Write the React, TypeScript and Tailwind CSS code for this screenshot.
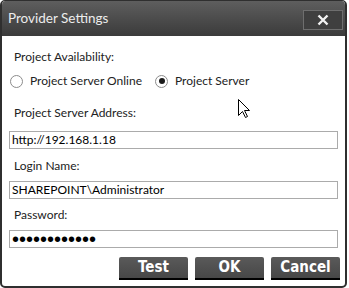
import React from 'react';

const font = { fontFamily: 'Lato, "Open Sans", sans-serif' };

const Radio: React.FC<{ checked?: boolean; label: string }> = ({ checked, label }) => (
  <label className="flex items-center gap-[7px]">
    <span className="flex h-[13px] w-[13px] items-center justify-center rounded-full border border-[#8c8c8c] bg-white">
      {checked && <span className="h-[6px] w-[6px] rounded-full bg-[#1a1a1a]" />}
    </span>
    <span>{label}</span>
  </label>
);

const Field: React.FC<{ children: React.ReactNode; className?: string }> = ({ children, className }) => (
  <div className={`mx-[7px] flex h-[18px] items-center border border-[#ababab] bg-white px-[2px] text-[12px] text-black ${className ?? ''}`}>
    {children}
  </div>
);

const DialogButton: React.FC<{ label: string }> = ({ label }) => (
  <button className="h-[23px] w-[69px] rounded-t-[2px] border-b-2 border-black bg-gradient-to-b from-[#5a5a5a] to-[#474747] font-['DejaVu_Sans_Condensed','Liberation_Sans',sans-serif] text-[15px] leading-[21px] font-bold text-white">
    {label}
  </button>
);

export default function App() {
  return (
    <div className="relative h-[288px] w-[349px] bg-white" style={font}>
      <div className="flex h-[288px] w-[347px] flex-col overflow-hidden rounded-[5px] border-x-2 border-b-2 border-t border-[#2f2f2f] bg-white">
        {/* title bar */}
        <div className="flex h-[35px] shrink-0 items-center justify-between bg-gradient-to-b from-[#5e5e5e] to-[#3b3b3b] pl-[6px] pr-[2px]">
          <span className="text-[13.5px] leading-none text-[#ececec]">Provider Settings</span>
          <button className="mt-[2px] flex h-[20px] w-[40px] items-center justify-center border border-[#6e6e6e] bg-[#3f3f3f]">
            <svg width="12" height="12" viewBox="0 0 12 12">
              <path d="M1.5 1.5 L10.5 10.5 M10.5 1.5 L1.5 10.5" stroke="#f2f2f2" strokeWidth="2.4" />
            </svg>
          </button>
        </div>

        {/* body */}
        <div className="flex flex-col text-[12px] leading-[16px] text-[#222]">
          <div className="mt-[13px] pl-[12px]">Project Availability:</div>
          <div className="mt-[8px] flex gap-[13px] pl-[8px]">
            <Radio label="Project Server Online" />
            <Radio checked label="Project Server" />
          </div>
          <div className="mt-[16px] pl-[12px]">Project Server Address:</div>
          <Field className="mt-[10px]">http://192.168.1.18</Field>
          <div className="mt-[9px] pl-[12px]">Login Name:</div>
          <Field className="mt-[7px]">SHAREPOINT\Administrator</Field>
          <div className="mt-[8px] pl-[12px]">Password:</div>
          <Field className="mt-[7px]">
            <span className="font-['Liberation_Sans',sans-serif] text-[20px] leading-[16px]">••••••••••••</span>
          </Field>
          <div className="mt-[9px] flex justify-end gap-[7px] pr-[5px]">
            <DialogButton label="Test" />
            <DialogButton label="OK" />
            <DialogButton label="Cancel" />
          </div>
        </div>
      </div>

      {/* mouse pointer */}
      <svg className="absolute left-[238px] top-[99px]" width="14" height="20" viewBox="0 0 14 20">
        <path d="M0.5 0.5 L0.5 16.5 L4.5 12.5 L7.5 18.5 L9.5 17.5 L6.5 11.5 L11.5 11.5 Z" fill="#fff" stroke="#000" strokeWidth="1" />
      </svg>
    </div>
  );
}
